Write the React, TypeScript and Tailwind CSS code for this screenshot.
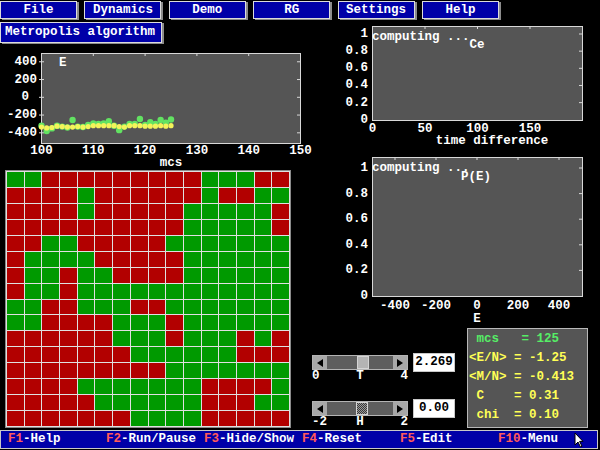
import React from 'react';

const menu = ['File', 'Dynamics', 'Demo', 'RG', 'Settings', 'Help'];

// 16x16 Ising lattice, R = spin down, G = spin up
const lattice = [
  'GGRRRRRRRRRGGGRR',
  'RRRRGRRRRRRGRRGG',
  'RRRRGRRRRRGGGGGR',
  'RRRRRRRRRRGGGGGR',
  'RRGGRRRRRGGGGGGG',
  'RGGGGRRRRRGGGGGG',
  'RGGRGGRRRRGGGGGG',
  'RGGRGGGGGGGGGGGG',
  'GGRRGGGRRGGGGGGG',
  'GGRRRRGGGRGGGGGG',
  'RRRRRRGGGRGGGRGR',
  'RRRRRRRGGGGGGRRR',
  'RRRRRRRRRGGGGGGG',
  'RRRRGGGGGGGRRRRG',
  'RRRRRGGGGGGRRRGG',
  'RRRRRRRGGGGRRRRR',
];

const greenE = [-320, -380, -350, -320, -330, -340, -255, -330, -335, -310, -295, -300, -295, -270, -320, -370, -330, -300, -300, -245, -310, -280, -300, -255, -285, -250];
const yellowE = [-335, -345, -340, -325, -330, -335, -335, -330, -335, -330, -320, -320, -320, -320, -320, -330, -335, -320, -320, -320, -325, -325, -325, -320, -325, -320];

const txt = {
  fill: '#ffffff',
  fontFamily: "'Liberation Mono', 'DejaVu Sans Mono', monospace",
  fontWeight: 700,
  fontSize: 12.5,
  dominantBaseline: 'central' as const,
};

const keys: [string, string][] = [
  ['F1', '-Help'],
  ['F2', '-Run/Pause'],
  ['F3', '-Hide/Show'],
  ['F4', '-Reset'],
  ['F5', '-Edit'],
  ['F10', '-Menu'],
];

const EnergyChart: React.FC = () => {
  const ex = (m: number) => 41.5 + (m - 100) * 5.18;
  const ey = (v: number) => 97.3 - v * 0.0888;
  return (
    <svg width={305} height={125} viewBox="0 43 305 125" className="block overflow-visible">
      <rect x={41.5} y={53.5} width={259} height={90} fill="#555555" stroke="#d8d8d8" />
      {[400, 200, 0, -200, -400].map((v) => (
        <g key={v}>
          <text {...txt} x={v === 0 ? 29 : 37} y={ey(v)} textAnchor="end">
            {v}
          </text>
          <line x1={39} x2={44} y1={ey(v)} y2={ey(v)} stroke="#d8d8d8" />
          <line x1={297} x2={300} y1={ey(v)} y2={ey(v)} stroke="#d8d8d8" />
        </g>
      ))}
      {[100, 110, 120, 130, 140, 150].map((m) => (
        <g key={m}>
          <text {...txt} x={ex(m)} y={151} textAnchor="middle">
            {m}
          </text>
          <line x1={ex(m)} x2={ex(m)} y1={53} y2={56} stroke="#d8d8d8" />
        </g>
      ))}
      <text {...txt} x={171} y={162.5} textAnchor="middle">
        mcs
      </text>
      <text {...txt} x={59} y={63}>
        E
      </text>
      {greenE.map((v, i) => (
        <circle key={'g' + i} cx={ex(100 + i)} cy={ey(v)} r={3.2} fill="#62e262" />
      ))}
      {yellowE.map((v, i) => (
        <circle key={'y' + i} cx={ex(100 + i)} cy={ey(v)} r={2.6} fill="#f4f45a" />
      ))}
    </svg>
  );
};

const CorrelationChart: React.FC = () => {
  const cx = (t: number) => 372.5 + t * 1.05;
  const cy = (v: number) => 119.8 - v * 85.8;
  return (
    <svg width={295} height={127} viewBox="305 21 295 127" className="block overflow-visible">
      <rect x={372.5} y={26.5} width={210} height={94} fill="#555555" stroke="#d8d8d8" />
      {[1, 0.8, 0.6, 0.4, 0.2, 0].map((v) => (
        <g key={v}>
          <text {...txt} x={368} y={cy(v)} textAnchor="end">
            {v}
          </text>
          {v > 0 && <line x1={579} x2={583} y1={cy(v)} y2={cy(v)} stroke="#d8d8d8" />}
        </g>
      ))}
      {[0, 50, 100, 150].map((t) => (
        <g key={t}>
          <text {...txt} x={cx(t)} y={128.5} textAnchor="middle">
            {t}
          </text>
          {t > 0 && <line x1={cx(t)} x2={cx(t)} y1={26} y2={29} stroke="#d8d8d8" />}
        </g>
      ))}
      <text {...txt} x={492} y={141} textAnchor="middle">
        time difference
      </text>
      <text {...txt} x={372} y={37}>
        computing ...
      </text>
      <text {...txt} x={477} y={45} textAnchor="middle">
        Ce
      </text>
    </svg>
  );
};

const HistogramChart: React.FC = () => {
  const px = (v: number) => 477 + v * 0.205;
  const py = (v: number) => 296 - v * 128;
  return (
    <svg width={295} height={178} viewBox="305 148 295 178" className="block overflow-visible">
      <rect x={372.5} y={157.5} width={210} height={139} fill="#555555" stroke="#d8d8d8" />
      {[1, 0.8, 0.6, 0.4, 0.2, 0].map((v) => (
        <g key={v}>
          <text {...txt} x={368} y={py(v)} textAnchor="end">
            {v}
          </text>
          {v > 0 && <line x1={579} x2={583} y1={py(v)} y2={py(v)} stroke="#d8d8d8" />}
        </g>
      ))}
      {[-400, -200, 0, 200, 400].map((v) => (
        <g key={v}>
          <text {...txt} x={px(v)} y={305.5} textAnchor="middle">
            {v}
          </text>
          <line x1={px(v)} x2={px(v)} y1={157} y2={160} stroke="#d8d8d8" />
        </g>
      ))}
      <text {...txt} x={477} y={318.5} textAnchor="middle">
        E
      </text>
      <text {...txt} x={372} y={168}>
        computing ...
      </text>
      <text {...txt} x={476} y={176.5} textAnchor="middle">
        P(E)
      </text>
    </svg>
  );
};

const Arrow: React.FC<{ dir: 'left' | 'right' }> = ({ dir }) => (
  <div className="flex w-[14px] items-center justify-center bg-[#a8a8a8]">
    <svg width="6" height="8" viewBox="0 0 6 8">
      <path d={dir === 'left' ? 'M6 0L0 4L6 8Z' : 'M0 0L6 4L0 8Z'} fill="#000" />
    </svg>
  </div>
);

const Slider: React.FC<{
  thumb: string;
  min: string;
  label: string;
  max: string;
  value: string;
}> = ({ thumb, min, label, max, value }) => (
  <div className="flex items-start">
    <div className="ml-[7px] mt-[2px] w-[96px]">
      <div className="flex h-[15px] border border-[#b4b4b4] bg-[#5e5e5e]">
        <Arrow dir="left" />
        <div className="relative flex-1">{/* thumb sits over the track */}
          <div className={thumb} />
        </div>
        <Arrow dir="right" />
      </div>
      <div className="grid grid-cols-3 leading-[13px]">
        <span className="text-left">{min}</span>
        <span className="text-center">{label}</span>
        <span className="text-right">{max}</span>
      </div>
    </div>
    <div className="ml-[5px] flex h-[19px] w-[42px] items-center justify-center border border-[#c8c8c8] bg-white text-black">
      {value}
    </div>
  </div>
);

export default function App() {
  return (
    <div className="relative h-[450px] w-[600px] overflow-hidden bg-black font-['Liberation_Mono','DejaVu_Sans_Mono',monospace] text-[12.5px] font-bold text-white">
      {/* Menu bar */}
      <div className="flex h-[21px] gap-[7.4px] pt-[1px]">
        {menu.map((m) => (
          <div
            key={m}
            className="flex h-[18px] w-[77px] items-center justify-center border border-[#dcdcdc] bg-[#0000a8] shadow-[2px_1px_0_#8c8c8c]"
          >
            {m}
          </div>
        ))}
      </div>

      <div className="flex h-[408px]">
        {/* Left column */}
        <div className="w-[305px]">
          <div className="mt-[1px] flex h-[21px] w-[162px] items-center border border-[#dcdcdc] bg-[#0000a8] pl-[4px] shadow-[2px_1px_0_#8c8c8c]">
            Metropolis algorithm
          </div>
          <EnergyChart />
          <div className="ml-[5px] mt-[2px] grid h-[258px] w-[286px] grid-cols-16 grid-rows-16 gap-px border border-[#8a8a8a] bg-[#e0e0e0] p-px">
            {lattice.flatMap((row, r) =>
              row.split('').map((c, i) => (
                <div key={r * 16 + i} className={c === 'R' ? 'bg-[#b20000]' : 'bg-[#009a00]'} />
              ))
            )}
          </div>
        </div>

        {/* Right column */}
        <div className="w-[295px]">
          <CorrelationChart />
          <HistogramChart />
          <div className="flex h-[103px]">
            <div className="w-[162px] pt-[27px]">
              <Slider
                thumb="absolute left-[30px] top-0 h-full w-[12px] border border-[#d4d4d4] bg-[#b4b4b4]"
                min="0"
                label="T"
                max="4"
                value="2.269"
              />
              <div className="mt-[16px]">
                <Slider
                  thumb="absolute left-[29px] top-0 h-full w-[12px] border border-[#d4d4d4] bg-[repeating-conic-gradient(#9a9a9a_0_25%,#3a3a3a_0_50%)] bg-[length:2px_2px]"
                  min="-2"
                  label="H"
                  max="2"
                  value="0.00"
                />
              </div>
            </div>
            <div className="mt-[2px] h-[100px] w-[121px] whitespace-pre border border-[#b8b8b8] bg-[#555555] pl-[1px] pt-[1px] leading-[19px] text-[#ffff55]">
              <div className="text-[#55ee66]">{' mcs   = 125'}</div>
              <div>{'<E/N> = -1.25'}</div>
              <div>{'<M/N> = -0.413'}</div>
              <div>{' C    = 0.31'}</div>
              <div>{' chi  = 0.10'}</div>
            </div>
          </div>
        </div>
      </div>

      {/* Status bar */}
      <div className="relative mt-[1px] flex h-[19px] w-[598px] items-center whitespace-pre border border-[#c8c8c8] bg-[#0000a8] pl-[7px]">
        {keys.map(([k, l]) => (
          <div key={k} className="w-[98px]">
            <span className="text-[#ff5a5a]">{k}</span>
            {l}
          </div>
        ))}
        <svg className="absolute left-[573px] top-[1px]" width="10" height="16" viewBox="0 0 10 16">
          <path d="M1 1L1 13L4 10L6.5 15L8 14.3L5.6 9.4L9 9.4Z" fill="#fff" stroke="#000" strokeWidth="1" />
        </svg>
      </div>
    </div>
  );
}
